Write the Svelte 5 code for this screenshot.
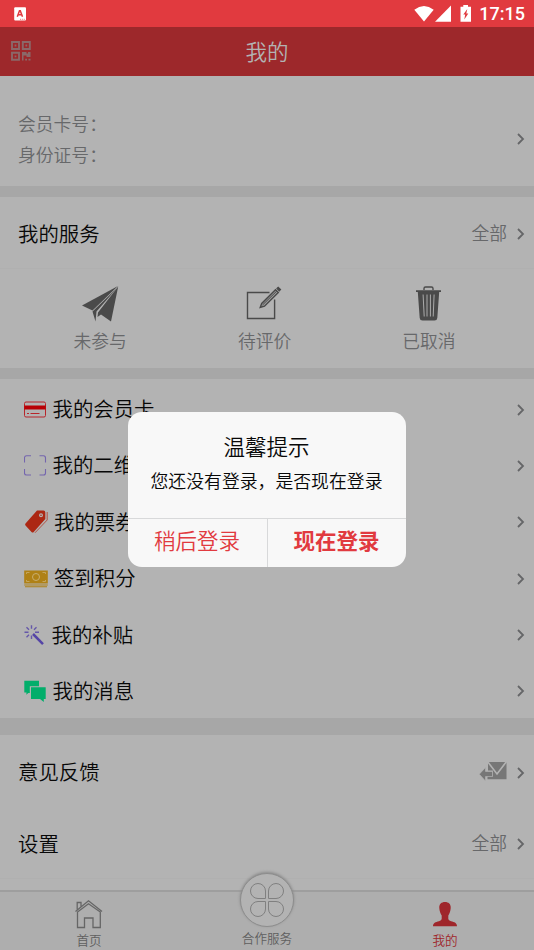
<script>
  const services = [
    { id: 'plane', label: '未参与' },
    { id: 'edit', label: '待评价' },
    { id: 'trash', label: '已取消' },
  ]

  const menu = [
    { id: 'card', label: '我的会员卡', gap: 5.5 },
    { id: 'scan', label: '我的二维码', gap: 5.5 },
    { id: 'tag', label: '我的票券', gap: 5 },
    { id: 'cash', label: '签到积分', gap: 5 },
    { id: 'wand', label: '我的补贴', gap: 5.5 },
    { id: 'chat', label: '我的消息', gap: 5.5 },
  ]

  let dialogOpen = $state(true)

  function closeDialog() {
    dialogOpen = false
  }
</script>

{#snippet chevron()}
  <svg class="chevron" width="8" height="12" viewBox="0 0 8 12">
    <path d="M1 1 6 6 1 11" fill="none" stroke="#656668" stroke-width="1.8" />
  </svg>
{/snippet}

{#snippet serviceIcon(id)}
  <svg width="38" height="38" viewBox="0 0 38 38">
    {#if id === 'plane'}
      <g fill="#4a4a4a">
        <path d="M37 1 1 20.5 11.5 25.5Z" />
        <path d="M36 3 11.5 26.5 14.5 36.5 15.5 26.5Z" />
        <path d="M37.2 1.5 17 27.5 16.5 32 20 29.5 30 36.5Z" />
      </g>
    {:else if id === 'edit'}
      <path d="M23.5 7.5H1.5V33.5H28.6V14.5" fill="none" stroke="#4a4a4a" stroke-width="1.4" />
      <path d="M14.2 22.5 15.7 18.5 29.5 4.7 32.3 7.5 18.5 21.2Z" fill="#999" stroke="#4a4a4a" stroke-width="1.4" />
      <path d="M16.5 20 30.8 6" stroke="#4a4a4a" stroke-width="1" />
      <path d="m31 3.500 1.200-1.200 2.300 2.300-1.200 1.200Z" fill="#4a4a4a" stroke="#4a4a4a" stroke-width="1.200" />
    {:else}
      <path d="M14 5V3.500Q14 2 15.500 2H21.500Q23 2 23 3.500V5" fill="none" stroke="#4a4a4a" stroke-width="1.400" />
      <path d="M6 5.200H31V7H29.200L27.300 33Q27.100 35.500 24.500 35.500H12.500Q9.900 35.500 9.700 33L7.800 7H6Z" fill="#4a4a4a" />
      <path d="M13.100 9.500 14.200 31.500M17 9.500V31.500M20.400 9.500V31.500M24.100 9.500 23.200 31.500" stroke="#aaa" stroke-width="1" />
    {/if}
  </svg>
{/snippet}

{#snippet menuIcon(id)}
  {#if id === 'card'}
    <svg width="23" height="17" viewBox="0 0 23 17">
      <rect x=".5" y="1" width="21" height="15" rx="1.5" fill="none" stroke="#b8252a" stroke-width="1" />
      <path d="M.3 4.500H21.700V8.500H.3Z" fill="#b90005" />
      <path d="M3 12.500H5M6.500 12.500H15.500" stroke="#b8252a" stroke-width="1" />
    </svg>
  {:else if id === 'scan'}
    <svg width="23" height="21" viewBox="0 0 23 21">
      <path
        d="M.5 7.500V3Q.5 .8 2.500 .8H7M15.500 .8H19.500Q21.500 .8 21.500 3V7.500M21.500 14V18Q21.500 20 19.500 20H15.500M7 20H2.500Q.5 20 .5 18V14"
        fill="none"
        stroke="#7465ae"
        stroke-width="1.100"
      />
    </svg>
  {:else if id === 'tag'}
    <svg width="25" height="24" viewBox="0 0 25 24">
      <path fill-rule="evenodd" d="M13 .5H19.500Q21.300 .5 21.300 2.500V9L9.500 22.300Q8.500 23 7.500 22L1.500 15.500Q.7 14.500 1.500 13.500ZM17 3.300A2 2 0 1 0 17 7.300 2 2 0 0 0 17 3.300Z" fill="#ac2713" />
      <path d="M23.200 2V10L11 22.800" fill="none" stroke="#b33a2a" stroke-width=".8" />
      <circle cx="17" cy="5.300" r=".8" fill="#ac2713" />
    </svg>
  {:else if id === 'cash'}
    <svg width="25" height="18" viewBox="0 0 25 18">
      <path d="M.2.5H23.800V13.500H.2ZM.2 14.500H23.800V15.400H.2ZM1 16.200H23V17.200H1Z" fill="#af8116" />
      <circle cx="12" cy="7" r="3.500" fill="none" stroke="#c8ae70" stroke-width="1" />
      <path d="M2.500 2.500H5.500M18.500 2.500H21.500M2.500 11.500H5.500M18.500 11.500H21.500M2.500 2.500V4M21.500 2.500V4M2.500 10V11.500M21.500 10V11.500" stroke="#c8ae70" stroke-width=".8" />
    </svg>
  {:else if id === 'wand'}
    <svg width="22" height="21" viewBox="0 0 22 21">
      <path d="M9 9 19 19.200" stroke="#5545a6" stroke-width="2.500" />
      <path d="M7.500 .3V3.800M7.500 10.500V14M.5 7.300H4.500M11 7.300H15M2.500 2.300 5 4.800M12.500 2.300 10 4.800M2.500 12.300 5 9.800" stroke="#6557a9" stroke-width="1.400" />
    </svg>
  {:else}
    <svg width="23" height="23" viewBox="0 0 23 23">
      <path d="M.3 .8H15V6.300H5.800V13H4.300L2.300 14.700 2.500 12.500H.3Z" fill="#02ae6b" />
      <path d="M7 7.300H21.700V19H19.800V22L16 19H7Z" fill="#02ae6b" />
    </svg>
  {/if}
{/snippet}

<div class="app">
  <div class="status">
    <svg class="status__app" width="13" height="14" viewBox="0 0 13 14">
      <rect x=".2" y=".2" width="11.800" height="13.300" rx="1" fill="#fff" />
      <path d="M3.300 9.800 5.500 3.700H6.300L8.500 9.800M4.300 7.800H8" fill="none" stroke="#e13a3f" stroke-width="1.500" />
      <path d="M6 12.300H7M7.800 12.300H8.800M9.700 12.300H10.800" stroke="#e13a3f" stroke-width=".7" />
    </svg>
    <div class="status__right">
      <svg width="58" height="18" viewBox="0 0 58 18">
        <path d="M.3 4.700Q10 -2.500 19.700 4.700L10 16.500Z" fill="#fff" />
        <path d="M37 .5V16.700H21Z" fill="#fff" />
        <path d="M49.300 0H54V1.700H57V16.700H46.500V1.700H49.300Z" fill="#fff" />
        <path d="M53.300 4 49.300 9.500H51.200L50.300 14.500 54.300 8.500H52.300Z" fill="#e13a3f" />
      </svg>
      <span class="status__time">17:15</span>
    </div>
  </div>

  <header class="header">
    <svg class="header__qr" width="20" height="20" viewBox="0 0 20 20">
      <path
        d="M1 1H8V8H1ZM11.800 1H18.800V8H11.800ZM1 11.800H8V18.800H1Z"
        fill="none"
        stroke="#8b6869"
        stroke-width="1.900"
      />
      <path d="M3.600 3.600H5.400V5.400H3.600ZM14.400 3.600H16.200V5.400H14.400ZM3.600 14.400H5.400V16.200H3.600ZM11 11H15.500V12.500H17V11H19.500V16H15.500V14.500H12.500V19.500H11ZM14.200 17.800H16V19.500H14.200ZM17.500 17.800H19.500V19.500H17.500Z" fill="#8b6869" />
    </svg>
    <h1>我的</h1>
  </header>

  <section class="profile">
    <div>
      <p>会员卡号：</p>
      <p>身份证号：</p>
    </div>
    {@render chevron()}
  </section>

  <section class="services">
    <div class="services__head">
      <h2>我的服务</h2>
      <span class="more">全部</span>
      {@render chevron()}
    </div>
    <div class="services__grid">
      {#each services as item (item.id)}
        <div class="service">
          {@render serviceIcon(item.id)}
          <span>{item.label}</span>
        </div>
      {/each}
    </div>
  </section>

  <section class="menu">
    {#each menu as item (item.id)}
      <div class="menu__row">
        {@render menuIcon(item.id)}
        <span class="menu__label" style:margin-left="{item.gap}px">{item.label}</span>
        {@render chevron()}
      </div>
    {/each}
  </section>

  <section class="extra">
    <div class="extra__row">
      <h2>意见反馈</h2>
      <svg class="mail" width="28" height="20" viewBox="0 0 28 20">
        <path d="M9 1H27.500V18.300H8.500V15.500H14V9.500H9Z" fill="#777" />
        <path d="M8.500 .5 18 13 27.500.5" fill="none" stroke="#b3b3b3" stroke-width="1.600" />
        <path d="M.3 13.200 6.500 6.500V10.500H13.500V15.500H6.500V20Z" fill="#777" stroke="#b3b3b3" stroke-width=".6" />
      </svg>
      {@render chevron()}
    </div>
    <div class="extra__row">
      <h2>设置</h2>
      <span class="more">全部</span>
      {@render chevron()}
    </div>
  </section>

  <nav class="tabs">
    <div class="tab">
      <svg width="30" height="31" viewBox="0 0 30 31">
        <path
          d="M1.500 12.500 14.500 1.800 28 12.500M3.200 10.500V3.500H7V7.500M3.500 13V28.500H10.500V19H19V28.500H26.300V13L14.500 4.800Z"
          fill="none"
          stroke="#666"
          stroke-width="1.300"
        />
      </svg>
      <span>首页</span>
    </div>
    <div class="tab">
      <div class="clover">
        <svg width="36" height="36" viewBox="0 0 36 36">
          <path
            d="M16.500 16.500V9A7.500 7.500 0 1 0 9 16.500ZM19.500 16.500V9A7.500 7.500 0 1 1 27 16.500ZM16.500 19.500V27A7.500 7.500 0 1 1 9 19.500ZM19.500 19.500V27A7.500 7.500 0 1 0 27 19.500Z"
            fill="none"
            stroke="#808080"
            stroke-width="1"
          />
        </svg>
      </div>
      <span>合作服务</span>
    </div>
    <div class="tab tab--active">
      <svg width="26" height="31" viewBox="0 0 26 31">
        <path d="M13 3C9.500 3 7 5 7.300 9 7.500 12.500 8.500 14.500 9.700 16.500V20Q9.500 21.500 7 22.200C3.500 23 1 23.800 1 27.200H25C25 23.800 22.500 23 19 22.200Q16.500 21.500 16.300 20V16.500C17.500 14.500 18.500 12.500 18.700 9 19 5 16.500 3 13 3Z" fill="#9f262b" />
      </svg>
      <span>我的</span>
    </div>
  </nav>

  {#if dialogOpen}
    <div class="dialog" role="dialog" aria-labelledby="dialog-title">
      <div class="dialog__body">
        <h3 id="dialog-title">温馨提示</h3>
        <p>您还没有登录，是否现在登录</p>
      </div>
      <div class="dialog__actions">
        <button type="button" onclick={closeDialog}>稍后登录</button>
        <button type="button" class="primary" onclick={closeDialog}>现在登录</button>
      </div>
    </div>
  {/if}
</div>

<style>
  :global(body) {
    margin: 0;
    background: #b3b3b3;
  }

  .app {
    position: relative;
    display: flex;
    flex-direction: column;
    width: 534px;
    height: 950px;
    overflow: hidden;
    background: #a7a7a7;
    color: #080808;
    font-family: 'Noto Sans CJK SC', sans-serif;
    font-weight: 350;
  }

  .app * {
    box-sizing: border-box;
  }

  svg {
    display: block;
    flex: none;
  }

  h1,
  h2,
  h3,
  p {
    margin: 0;
    font-weight: 350;
  }

  .status {
    display: flex;
    align-items: center;
    justify-content: space-between;
    height: 27px;
    padding: 0 9px 0 14px;
    background: #e13a3f;
  }

  .status__right {
    display: flex;
    align-items: center;
    gap: 7px;
  }

  .status__time {
    padding-top: 1px;
    color: #fff;
    font: 500 18px/26px Roboto, sans-serif;
  }

  .header {
    display: grid;
    grid-template-columns: 20px 1fr 20px;
    align-items: center;
    height: 49px;
    padding: 0 11px;
    background: #9d282b;
  }

  .header h1 {
    color: #b3b3b3;
    font-size: 21.5px;
    line-height: 30px;
    text-align: center;
  }

  .profile,
  .services,
  .menu,
  .extra {
    background: #b3b3b3;
  }

  .profile {
    display: flex;
    align-items: center;
    justify-content: space-between;
    height: 110px;
    padding: 16px 9px 0 18px;
  }

  .profile p {
    color: #67686a;
    font-size: 17.8px;
    line-height: 31px;
  }

  .services {
    height: 172px;
    margin-top: 11px;
  }

  .services__head {
    display: flex;
    align-items: center;
    height: 72px;
    padding: 4px 9px 0 18px;
    border-bottom: 1px solid #b0b0b0;
  }

  h2 {
    flex: 1;
    margin-top: -3px;
    font-size: 20.4px;
    line-height: 30px;
  }

  .more {
    margin: -5px 10px 0 0;
    color: #67686a;
    font-size: 17.8px;
    line-height: 26px;
  }

  .services__grid {
    display: grid;
    grid-template-columns: repeat(3, 164.4px);
    padding: 16px 0 0 18px;
  }

  .service {
    display: flex;
    flex-direction: column;
    align-items: center;
    color: #67686a;
    font-size: 17.8px;
    line-height: 26px;
    gap: 4px;
  }

  .menu {
    height: 339px;
    margin-top: 11px;
    padding: 2px 9px 0 24px;
  }

  .menu__row {
    display: flex;
    align-items: center;
    height: 56.4px;
  }

  .menu__label {
    flex: 1;
    margin-top: -3px;
    font-size: 20.4px;
    line-height: 30px;
  }

  .extra {
    height: 155px;
    margin-top: 17px;
    padding-top: 2px;
  }

  .extra__row {
    display: flex;
    align-items: center;
    height: 71px;
    padding: 0 9px 0 18px;
  }

  .extra__row + .extra__row {
    padding-top: 2px;
    border-bottom: 1px solid #b0b0b0;
  }

  .mail {
    margin: -4px 10px 0 0;
  }

  .tabs {
    display: grid;
    grid-template-columns: 178px 178px 178px;
    height: 60px;
    border-top: 2px solid #9e9e9e;
    background: #aeaeae;
  }

  .tab {
    display: flex;
    flex-direction: column;
    align-items: center;
    padding-top: 7px;
    color: #5f5f5f;
    font-size: 12.6px;
    line-height: 20px;
  }

  .tab--active {
    color: #9f262b;
  }

  .clover {
    display: grid;
    place-items: center;
    width: 54px;
    height: 54px;
    margin: -26px 0 1px;
    border: 1px solid #8d8d8d;
    border-radius: 50%;
    background: #b3b3b3;
    box-shadow: 0 -1px 3px #888;
  }

  .dialog {
    position: absolute;
    top: 412px;
    left: 127.5px;
    display: flex;
    flex-direction: column;
    width: 278px;
    height: 154.5px;
    overflow: hidden;
    border-radius: 14px;
    background: #f8f8f8;
    text-align: center;
  }

  .dialog__body {
    flex: 1;
    padding-top: 18px;
  }

  .dialog h3 {
    font-size: 21.5px;
    line-height: 32px;
  }

  .dialog p {
    margin-top: 5px;
    font-size: 17.85px;
    line-height: 26px;
    white-space: nowrap;
  }

  .dialog__actions {
    display: grid;
    grid-template-columns: 1fr 1fr;
    height: 49px;
    border-top: 1px solid #d8d9da;
  }

  button {
    padding: 0 0 5px;
    border: 0;
    background: none;
    color: #e13a3f;
    font: 350 21.5px/30px 'Noto Sans CJK SC', sans-serif;
  }

  .primary {
    border-left: 1px solid #d8d9da;
    font-weight: 700;
  }
</style>
